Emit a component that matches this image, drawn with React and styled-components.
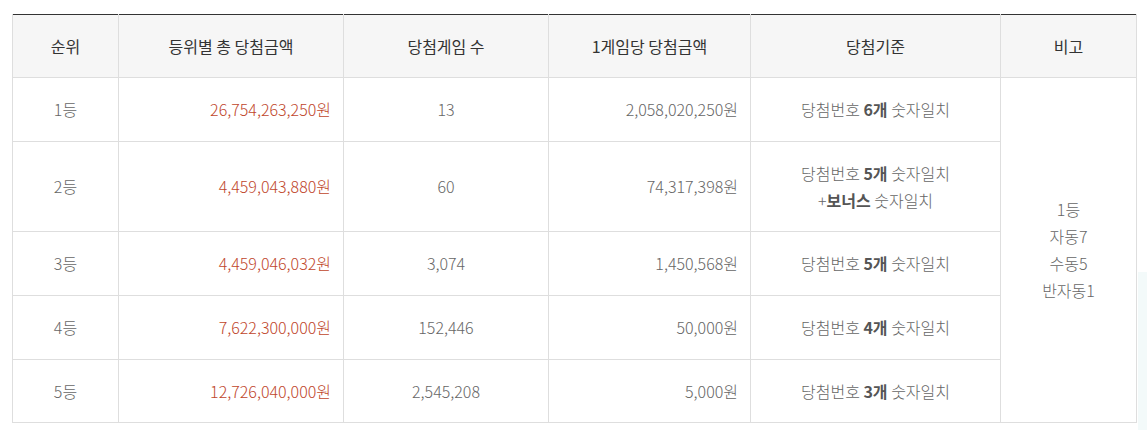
import React from "react";
import styled, { createGlobalStyle } from "styled-components";

const GlobalStyle = createGlobalStyle`
  html, body {
    margin: 0;
    padding: 0;
    background: #fff;
  }
  body {
    font-family: "Noto Sans CJK KR", "Noto Sans", sans-serif;
    overflow: hidden;
  }
`;

const Page = styled.div`
  position: relative;
  padding: 14px 10px 0 12px;
  width: 1147px;
  height: 430px;
  box-sizing: border-box;
  overflow: hidden;
`;

const Table = styled.table`
  width: 1125px;
  border-collapse: collapse;
  table-layout: fixed;
  border-top: 1px solid #333;
  font-size: 16px;
  line-height: 27px;
`;

const Th = styled.th`
  box-sizing: border-box;
  width: ${(props) => props.$width || "auto"};
  height: 63px;
  background: #f6f6f6;
  color: #333;
  font-weight: 400;
  font-size: 16px;
  text-align: center;
  padding: 0 8px;
  border: 1px solid #dedede;
  border-top: none;
`;

const Td = styled.td`
  box-sizing: border-box;
  padding: 18px 12px 17.7px;
  border: 1px solid #dedede;
  color: #666;
  font-weight: 300;
  text-align: ${(props) => props.$align || "center"};
  vertical-align: middle;
`;

const Money = styled.span`
  color: #c0462b;
`;

const Strong = styled.b`
  color: #555;
  font-weight: 700;
`;

const Floating = styled.div`
  position: absolute;
  left: 1138px;
  top: 272px;
  width: 30px;
  height: 200px;
  background: #f3fafa;
`;

const ranks = [
  { rank: "1등", total: "26,754,263,250원", games: "13", each: "2,058,020,250원", match: "6" },
  { rank: "2등", total: "4,459,043,880원", games: "60", each: "74,317,398원", match: "5", bonus: true },
  { rank: "3등", total: "4,459,046,032원", games: "3,074", each: "1,450,568원", match: "5" },
  { rank: "4등", total: "7,622,300,000원", games: "152,446", each: "50,000원", match: "4" },
  { rank: "5등", total: "12,726,040,000원", games: "2,545,208", each: "5,000원", match: "3" },
];

const App = () => {
  return (
    <Page>
      <GlobalStyle />
      <Table>
        <thead>
          <tr>
            <Th $width="106px">순위</Th>
            <Th $width="225px">등위별 총 당첨금액</Th>
            <Th $width="205px">당첨게임 수</Th>
            <Th $width="202px">1게임당 당첨금액</Th>
            <Th $width="250px">당첨기준</Th>
            <Th>비고</Th>
          </tr>
        </thead>
        <tbody>
          {ranks.map((item, i) => (
            <tr key={i}>
              <Td>{item.rank}</Td>
              <Td $align="right">
                <Money>{item.total}</Money>
              </Td>
              <Td>{item.games}</Td>
              <Td $align="right">{item.each}</Td>
              <Td>
                당첨번호 <Strong>{item.match}개</Strong> 숫자일치
                {item.bonus && (
                  <>
                    <br />+<Strong>보너스</Strong> 숫자일치
                  </>
                )}
              </Td>
              {i === 0 && (
                <Td rowSpan={5}>
                  1등
                  <br />
                  자동7
                  <br />
                  수동5
                  <br />
                  반자동1
                </Td>
              )}
            </tr>
          ))}
        </tbody>
      </Table>
      <Floating />
    </Page>
  );
};

export default App;
